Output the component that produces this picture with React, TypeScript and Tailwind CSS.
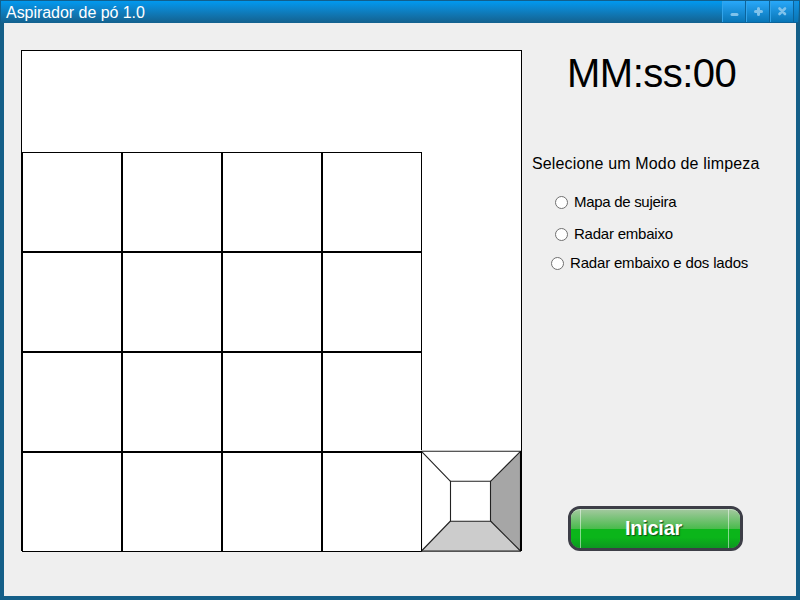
import React from "react";

function Vacuum() {
  return (
    <svg width="101" height="102" viewBox="421 450 101 102" className="-ml-px -mt-0.5 shrink-0 self-end" shapeRendering="crispEdges">
      <rect x="421" y="450" width="100" height="101" fill="#fff" />
      <path d="M520 451L490 481V521L520 551Z" fill="#a6a6a6" />
      <path d="M421 551L450 521H490L520 551Z" fill="#ccc" />
      <g fill="none" stroke="#222" strokeWidth="1.1" shapeRendering="auto">
        <path d="M421.5 451.4L450.5 481.4M520.5 451.4L490.5 481.4M421.5 551L450.5 521M520.5 551L490.5 521" />
        <path d="M421 451.3H521M421 551.1H521M450.5 481.3H490.5V521.2H450.5Z" />
        <path d="M421.5 451V551M520.5 451V551" stroke="#000" />
      </g>
      <path d="M521.5 450V551" stroke="#000" />
    </svg>
  );
}

function Board() {
  return (
    <div className="ml-[17px] mt-[27px] h-[501px] w-[501px] shrink-0 border border-black bg-white">
      <div className="mt-[101px] flex h-[400px] w-[500px]">
        <div className="grid shrink-0 grid-cols-4">
          {Array.from({ length: 16 }, (_, i) => (
            <div key={i} className="h-[100px] w-[100px] border border-black bg-white" />
          ))}
        </div>
        <Vacuum />
      </div>
    </div>
  );
}

function Option({ label, className }: { label: string; className: string }) {
  return (
    <label className={`flex h-[18px] items-center whitespace-nowrap text-[15px] leading-[18px] ${className}`}>
      <span className="mr-[6px] h-[13px] w-[13px] shrink-0 rounded-full border border-[#707070] bg-white" />
      <span>{label}</span>
    </label>
  );
}

function WindowButton({ children }: { children: React.ReactNode }) {
  return (
    <div className="h-[21px] w-[23px] border-l border-[#32a4ea] bg-linear-to-b from-[#28a8fa] to-[#0876b7]">
      <svg width="22" height="21" fill="none" stroke="#7fc2eb" strokeWidth="3" strokeLinecap="round">{children}</svg>
    </div>
  );
}

export default function App() {
  return (
    <div className="flex h-[600px] w-[800px] flex-col overflow-hidden bg-[#155f88] font-['Liberation_Sans',Arial,sans-serif] text-black">
      <div className="flex h-[23px] shrink-0 border border-b-0 border-[#125f8c] bg-linear-to-b from-[#0099f0] to-[#13618e]">
        <div className="ml-[5px] flex-1 text-[16px] leading-[23px] tracking-[-0.04px] text-white">Aspirador de pó 1.0</div>
        <div className="mr-px flex h-[22px] gap-px bg-[#0c639a] pb-px">
          <WindowButton><path d="M9 13.5H14" /></WindowButton>
          <WindowButton><path d="M8.5 10.5H14.5M11.5 7.5V13.5" /></WindowButton>
          <WindowButton><path d="M8.5 7.5L14 13M14 7.5L8.5 13" strokeWidth="2.6" /></WindowButton>
          <div className="w-[4px] bg-linear-to-b from-[#1693e1] to-[#0876b7]" />
        </div>
      </div>
      <div className="mx-1 flex h-[573px] bg-[#efefef]">
        <Board />
        <div className="flex w-[274px] flex-col">
          <div className="ml-[45px] mt-[27px] h-[46px] whitespace-nowrap text-[40px] leading-[46px] tracking-[-0.5px]">MM:ss:00</div>
          <div className="ml-[10px] mt-[59px] h-[18px] whitespace-nowrap text-[16px] leading-[18px] tracking-[0.15px]">Selecione um Modo de limpeza</div>
          <Option className="ml-[33px] mt-[20px] tracking-[-0.3px]" label="Mapa de sujeira" />
          <Option className="ml-[33px] mt-[14px] tracking-[-0.22px]" label="Radar embaixo" />
          <Option className="ml-[29px] mt-[11px] tracking-[-0.18px]" label="Radar embaixo e dos lados" />
          <button className="ml-[46px] mt-[234px] flex h-[45px] w-[175px] rounded-[12px] border-[3px] border-[#3d3e47] bg-linear-to-b from-[#a0cb9c] from-0% via-[#43bb48] via-50% to-[#43bb48] p-0">
            <span className="flex h-[39px] w-[169px] items-center rounded-[9px] border-t border-[#c5ddc5] bg-[linear-gradient(to_bottom,#a0c89c_0%,#48bb4b_50%,#0bb51a_51%,#0bb51a_72%,#0c9820_100%)] pl-[9px]">
              <span className="-mt-px flex h-[39px] w-[149px] shrink-0 items-center justify-center border-x border-white/50 pb-px pr-[2px] text-[20px] font-bold leading-[23px] tracking-[-0.25px] text-white [text-shadow:1px_1px_1px_#124b17]">Iniciar</span>
            </span>
          </button>
        </div>
      </div>
    </div>
  );
}
